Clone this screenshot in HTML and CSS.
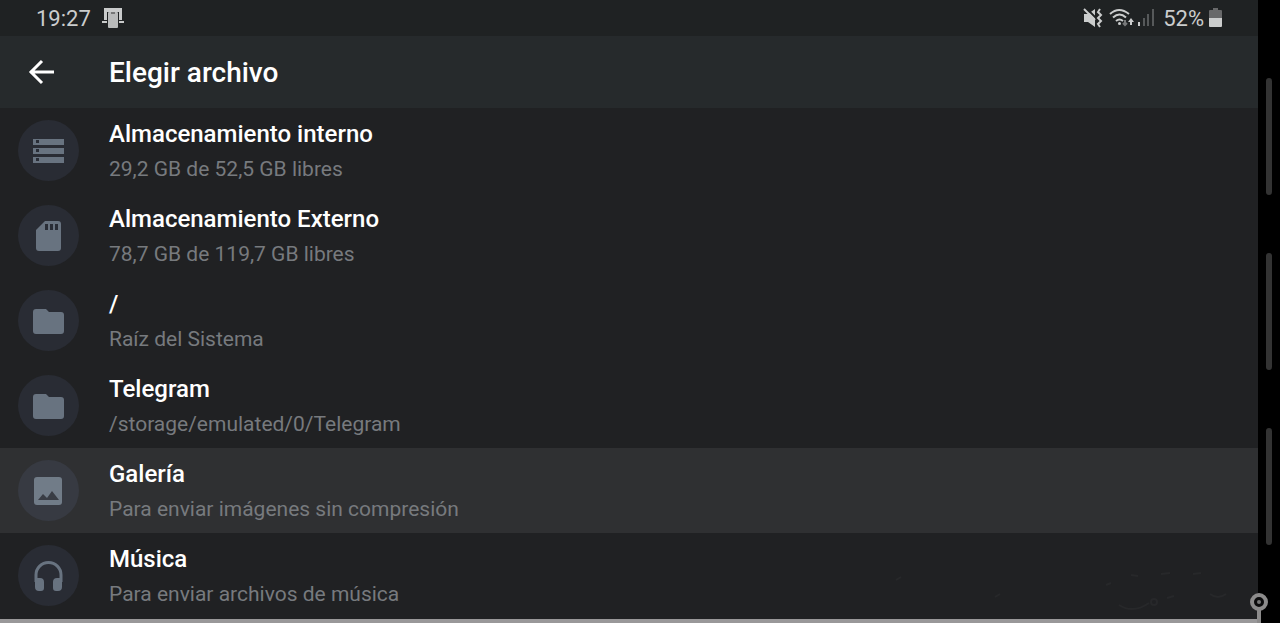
FILE: index.html
```
<!DOCTYPE html>
<html lang="es">

<head>
    <meta charset="utf-8">
    <meta name="viewport" content="width=device-width, initial-scale=1">
    <title>Elegir archivo</title>
    <link rel="stylesheet" href="styles.css">
</head>

<body>
    <div class="screen">
        <div class="status-bar">
            <div class="status-group">
                <span>19:27</span>
                <svg class="cast" width="22" height="22" viewBox="0 0 22 22">
                    <path fill="#c9cbcb" d="M2 1h18v12h-3V5H5v8H2zM0 14h5v2H0zM17 14h5v2h-5z" />
                    <rect x="6" y="5" width="10" height="16" rx="1" fill="#b9bbbb" />
                    <path d="M9 6h4" stroke="#333" />
                </svg>
            </div>
            <div class="status-group">
                <svg width="20" height="20" viewBox="0 0 20 20" fill="#cbcdcd">
                    <path d="M1 6h4l7-5v18l-7-5H1z" />
                    <path d="M3 0l10 10" stroke="#1f2223" stroke-width="2" />
                    <path d="M1 1l11 11" stroke="#cbcdcd" stroke-width="2" />
                    <path d="M17 1l-2 3 3 3-3 3 3 3-3 3 2 3" fill="none" stroke="#cbcdcd" stroke-width="2" />
                </svg>
                <svg class="wifi" width="24" height="20" viewBox="0 0 24 20" fill="none" stroke="#cbcdcd" stroke-width="2">
                    <path d="M1 6q9-8 19 0M4 9.500q6.500-6 13 0M7 13q3.500-3 7 0" />
                    <circle cx="10.500" cy="15.500" r="1.500" fill="#cbcdcd" stroke="none" />
                    <path d="M16 12v5M14 15l2 2 2-2" stroke="#77797a" />
                    <path d="M22 17v-5" />
                    <path d="M19 14l3-4 3 4z" fill="#cbcdcd" stroke="none" />
                </svg>
                <svg class="signal" width="17" height="20" viewBox="0 0 17 20">
                    <path d="M0 14h2v4H0z" fill="#cbcdcd" />
                    <path d="M5 10h2v8H5zM9 6h2v12H9zM14 1h2v17h-2z" fill="#56595a" />
                </svg>
                <span class="percent">52%</span>
                <svg width="13" height="20" viewBox="0 0 13 20">
                    <path d="M4 0h5v2h3q1 0 1 1v7H0V3q0-1 1-1h3z" fill="#68696a" />
                    <path d="M0 10h13v8q0 1-1 1H1q-1 0-1-1z" fill="#cbcdcd" />
                </svg>
            </div>
        </div>

        <header class="header">
            <button class="back" aria-label="Atrás">
                <svg width="26" height="26" viewBox="0 0 26 26" fill="none" stroke="#fff" stroke-width="3">
                    <path d="M2 13h24M14 2L3 13l11 11" />
                </svg>
            </button>
            <h1>Elegir archivo</h1>
        </header>

        <main class="list">
            <button class="item">
                <span class="icon">
                    <svg width="32" height="32" viewBox="0 0 32 32">
                        <path fill="#687380" d="M0 4h31v6H0zM0 13h31v6H0zM0 22h31v6H0z" />
                        <path fill="#292d36" d="M3 5h3v3H3zM3 14h3v3H3zM3 23h3v3H3z" />
                    </svg>
                </span>
                <span class="text">
                    <span class="name">Almacenamiento interno</span>
                    <span class="detail">29,2 GB de 52,5 GB libres</span>
                </span>
            </button>
            <button class="item">
                <span class="icon">
                    <svg width="32" height="32" viewBox="0 0 32 32">
                        <path fill="#687380" d="M12 1h13q3 0 3 3v24q0 3-3 3H6q-3 0-3-3V10z" />
                        <path fill="#292d36" d="M12 4h3v6h-3zM17 4h3v6h-3zM22 4h3v6h-3z" />
                    </svg>
                </span>
                <span class="text">
                    <span class="name">Almacenamiento Externo</span>
                    <span class="detail">78,7 GB de 119,7 GB libres</span>
                </span>
            </button>
            <button class="item">
                <span class="icon">
                    <svg width="32" height="32" viewBox="0 0 32 32">
                        <path fill="#687380" d="M3 4h10l3 3h12q3 0 3 3v16q0 3-3 3H3q-3 0-3-3V7q0-3 3-3z" />
                    </svg>
                </span>
                <span class="text">
                    <span class="name">/</span>
                    <span class="detail">Raíz del Sistema</span>
                </span>
            </button>
            <button class="item">
                <span class="icon">
                    <svg width="32" height="32" viewBox="0 0 32 32">
                        <path fill="#687380" d="M3 4h10l3 3h12q3 0 3 3v16q0 3-3 3H3q-3 0-3-3V7q0-3 3-3z" />
                    </svg>
                </span>
                <span class="text">
                    <span class="name">Telegram</span>
                    <span class="detail">/storage/emulated/0/Telegram</span>
                </span>
            </button>
            <button class="item active">
                <span class="icon">
                    <svg width="32" height="32" viewBox="0 0 32 32">
                        <rect x="1" y="2" width="28" height="28" rx="3" fill="#717c88" />
                        <path fill="#393d45" d="M5 25l5-6 4 4 5-7 7 9z" />
                    </svg>
                </span>
                <span class="text">
                    <span class="name">Galería</span>
                    <span class="detail">Para enviar imágenes sin compresión</span>
                </span>
            </button>
            <button class="item">
                <span class="icon">
                    <svg width="32" height="32" viewBox="0 0 32 32">
                        <path d="M3 22v-7a12 12 0 0 1 25 0v7" fill="none" stroke="#687380" stroke-width="3" />
                        <path fill="#687380" d="M2 18h5q4 0 4 4v6q0 3-3 3H6q-4 0-4-4zM29 18h-5q-4 0-4 4v6q0 3 3 3h2q4 0 4-4z" />
                    </svg>
                </span>
                <span class="text">
                    <span class="name">Música</span>
                    <span class="detail">Para enviar archivos de música</span>
                </span>
            </button>
        </main>

        <!-- worn marks in the corner -->
        <svg class="marks" width="360" height="50" viewBox="0 0 360 50" fill="none" stroke="#27282a" stroke-width="2">
            <path d="M18 11l5-3M117 28l5-3M228 16l5-2M241 36q14 9 30-2M253 6l7 1M283 5l9-1M315 5l8-1M332 25q8 6 16 0M289 29l7-2" />
            <circle cx="276" cy="33" r="3" />
        </svg>
    </div>

    <div class="edge">
        <span class="bar"></span>
        <span class="bar"></span>
        <span class="bar"></span>
    </div>

    <svg class="pin" width="18" height="30" viewBox="0 0 18 30">
        <path d="M9 17v13" stroke="#8c8b8b" stroke-width="4" />
        <circle cx="9" cy="9" r="7" fill="#0b0b0c" stroke="#8c8b8b" stroke-width="4" />
        <circle cx="9" cy="9" r="2" fill="#777" />
    </svg>
</body>

</html>
```

FILE: styles.css
```
* {
    box-sizing: border-box;
}

body {
    margin: 0;
    min-height: 100vh;
    display: flex;
    position: relative;
    background-color: #000;
    font-family: Roboto, "Liberation Sans", sans-serif;
}

button {
    border: none;
    background: none;
    padding: 0;
    font-family: inherit;
    cursor: pointer;
}

svg {
    display: block;
    flex-shrink: 0;
}

.screen {
    flex: 1;
    position: relative;
    display: flex;
    flex-direction: column;
    background-color: #202123;
    border-bottom: 4px solid #999899;
}

.status-bar {
    display: flex;
    justify-content: space-between;
    height: 36px;
    padding: 0 36px;
    background-color: #1f2223;
    color: #cbcdcd;
    font-size: 22px;
}

.status-group {
    display: flex;
    align-items: center;
}

.cast {
    margin-left: 11px;
}

.wifi {
    margin-left: 6px;
    overflow: visible;
}

.signal {
    margin-left: 5px;
}

.percent {
    margin: 0 5px 0 8px;
}

.header {
    display: flex;
    align-items: center;
    height: 72px;
    padding-left: 28px;
    background-color: #262a2c;
}

.back {
    width: 81px;
}

h1 {
    margin: 0;
    color: #fff;
    font-size: 28px;
    font-weight: 500;
}

.list {
    display: flex;
    flex-direction: column;
}

.item {
    display: flex;
    align-items: center;
    width: 100%;
    height: 85px;
    padding-left: 18px;
    text-align: left;
}

.item.active {
    background-color: #2f3032;
}

.icon {
    display: flex;
    align-items: center;
    justify-content: center;
    width: 61px;
    height: 61px;
    margin-right: 30px;
    border-radius: 50%;
    background-color: #292c34;
}

.active .icon {
    background-color: #373a42;
}

.text {
    display: flex;
    flex-direction: column;
    gap: 5px;
    padding-top: 2px;
}

.name {
    color: #fff;
    font-size: 24px;
    line-height: 30px;
    font-weight: 500;
}

.detail {
    color: #777a7e;
    font-size: 21px;
    line-height: 30px;
}

.marks {
    position: absolute;
    right: 20px;
    bottom: 0;
}

.edge {
    display: flex;
    flex-direction: column;
    align-items: center;
    gap: 58px;
    width: 22px;
    padding-top: 78px;
}

.bar {
    width: 6px;
    height: 117px;
    border-radius: 3px;
    background-color: #333;
}

.pin {
    position: absolute;
    right: 12px;
    bottom: 0;
}
```
